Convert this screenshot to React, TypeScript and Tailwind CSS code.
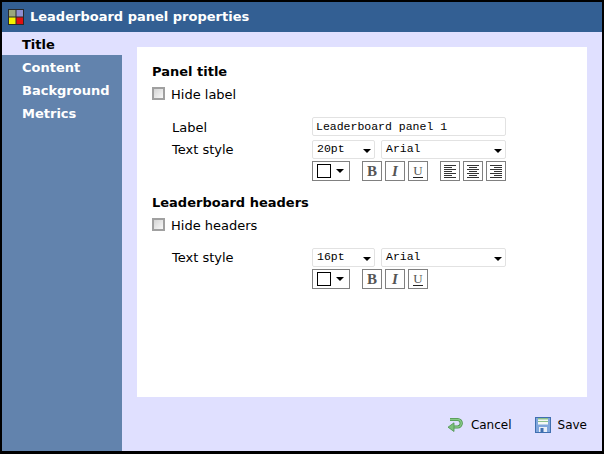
import React from 'react';

const font = { sans: 'font-["DejaVu_Sans",sans-serif]', mono: 'font-["Liberation_Mono",monospace]' };

const navItems = ['Title', 'Content', 'Background', 'Metrics'];

const Arrow: React.FC<{ className?: string }> = ({ className }) => (
  <svg width="8" height="4" viewBox="0 0 8 4" className={className}>
    <path d="M0 0h8L4 4z" fill="#000" />
  </svg>
);

const Checkbox: React.FC = () => (
  <span className="block w-[13px] h-[13px] mb-[3px] border-2 border-[#a0a0a0] bg-gradient-to-br from-[#d4d4d4] to-[#f8f8f8]" />
);

const Select: React.FC<{ value: string; width: string }> = ({ value, width }) => (
  <div className={`${width} h-[19px] flex items-center justify-between border border-[#e2e2e2] rounded-[2px] pl-[4px] pr-[3px] bg-white`}>
    <span className={`${font.mono} text-[11.5px] leading-none text-black mb-[2px]`}>{value}</span>
    <Arrow className="mt-[3px]" />
  </div>
);

const ToolButton: React.FC<{ children: React.ReactNode }> = ({ children }) => (
  <div className="w-[20px] h-[20px] border border-[#808080] flex items-center justify-center bg-white">{children}</div>
);

const AlignIcon: React.FC<{ kind: 'left' | 'center' | 'right' }> = ({ kind }) => {
  const rows = [12, 8, 12, 8, 12, 8, 12];
  return (
    <svg width="14" height="14" viewBox="0 0 14 14">
      {rows.map((w, i) => {
        const x = kind === 'left' ? 1 : kind === 'center' ? (14 - w) / 2 : 13 - w;
        return <rect key={i} x={x} y={1 + i * 2} width={w} height="1" fill="#333" />;
      })}
    </svg>
  );
};

const StyleButtons: React.FC<{ align?: boolean }> = ({ align }) => (
  <div className="flex items-center">
    <div className="w-[38px] h-[20px] border border-[#808080] flex items-center pl-[4px] gap-[5px] bg-white">
      <span className="block w-[14px] h-[14px] border border-black bg-white" />
      <Arrow />
    </div>
    <div className="flex gap-[3px] ml-[12px]">
      <ToolButton><span className='font-["Liberation_Serif",serif] font-bold text-[15px] leading-none text-[#555]'>B</span></ToolButton>
      <ToolButton><span className='font-["Liberation_Serif",serif] font-bold italic text-[15px] leading-none text-[#555]'>I</span></ToolButton>
      <ToolButton>
        <span className='font-["Liberation_Serif",serif] border-b border-[#222] text-[13px] leading-[13px] text-[#555]'>U</span>
      </ToolButton>
    </div>
    {align && (
      <div className="flex gap-[3px] ml-[12px]">
        <ToolButton><AlignIcon kind="left" /></ToolButton>
        <ToolButton><AlignIcon kind="center" /></ToolButton>
        <ToolButton><AlignIcon kind="right" /></ToolButton>
      </div>
    )}
  </div>
);

const TextStyle: React.FC<{ size: string; align?: boolean }> = ({ size, align }) => (
  <div className="flex">
    <span className="w-[160px] pl-[20px] text-[13px] leading-[20px] text-black">Text style</span>
    <div className="flex flex-col gap-[2px]">
      <div className="flex gap-[6px]">
        <Select value={size} width="w-[63px]" />
        <Select value="Arial" width="w-[125px]" />
      </div>
      <StyleButtons align={align} />
    </div>
  </div>
);

const App: React.FC = () => (
  <div className={`${font.sans} w-[604px] h-[454px] border-2 border-b-[3px] border-black flex flex-col bg-[#e0e0ff] overflow-hidden`}>
    <div className="h-[30px] shrink-0 bg-[#335f93] flex items-center pl-[6px] gap-[6px]">
      <svg width="16" height="16" viewBox="0 0 16 16" className="mb-[1px]">
        <rect width="16" height="16" fill="#2a2a2a" />
        <rect x="1" y="1" width="7" height="7" fill="#9aa67c" />
        <rect x="8" y="1" width="7" height="7" fill="#8f8fd0" />
        <rect x="1" y="8" width="7" height="7" fill="#f4f000" />
        <rect x="8" y="8" width="7" height="7" fill="#e01010" />
        <rect x="7.500" y="1" width="1" height="14" fill="#2a2a2a" />
        <rect x="1" y="7.500" width="14" height="1" fill="#2a2a2a" />
      </svg>
      <span className="text-[13px] font-bold text-white">Leaderboard panel properties</span>
    </div>
    <div className="flex flex-1 min-h-0">
      <div className="w-[120px] shrink-0 bg-[#6283ad] flex flex-col">
        {navItems.map((item, i) => (
          <div
            key={item}
            className={`h-[23px] pl-[20px] pt-[2px] flex items-center text-[13px] font-bold ${i === 0 ? 'bg-[#e0e0ff] text-black' : 'text-white'}`}
          >
            {item}
          </div>
        ))}
      </div>
      <div className="flex-1 flex flex-col pl-[15px] pr-[15px] pt-[15px]">
        <div className="h-[350px] bg-white pt-[16px] pl-[15px] flex flex-col">
          <h2 className="text-[13px] leading-[17px] font-bold text-black">Panel title</h2>
          <label className="flex items-center gap-[6px] mt-[6px] h-[17px] text-[13px] text-black">
            <Checkbox />
            Hide label
          </label>
          <div className="flex mt-[14px] h-[19px] items-center">
            <span className="w-[160px] pl-[20px] pt-[2px] text-[13px] leading-none text-black">Label</span>
            <div className="w-[194px] h-[19px] border border-[#e2e2e2] rounded-[2px] pl-[3px] flex items-center">
              <span className={`${font.mono} text-[11.5px] leading-none text-black`}>Leaderboard panel 1</span>
            </div>
          </div>
          <div className="mt-[4px]">
            <TextStyle size="20pt" align />
          </div>
          <h2 className="text-[13px] leading-[17px] font-bold text-black mt-[13px]">Leaderboard headers</h2>
          <label className="flex items-center gap-[6px] mt-[6px] h-[17px] text-[13px] text-black">
            <Checkbox />
            Hide headers
          </label>
          <div className="mt-[14px]">
            <TextStyle size="16pt" />
          </div>
        </div>
        <div className="flex justify-end items-center gap-[23px] h-[52px] pt-[3px] text-[12px] text-black">
          <div className="flex items-center gap-[8px]">
            <svg width="16" height="16" viewBox="0 0 16 16">
              <path d="M3 2.500h7.500a3.500 3.500 0 0 1 0 7.500H6.500" fill="none" stroke="#4c944c" strokeWidth="3.200" />
              <path d="M3 2.500h7.500a3.500 3.500 0 0 1 0 7.500H6.500" fill="none" stroke="#86c886" strokeWidth="1.600" />
              <path d="M7 5.800v8.700L1 10.200z" fill="#7cc07c" stroke="#4c944c" strokeWidth="0.800" />
            </svg>
            Cancel
          </div>
          <div className="flex items-center gap-[7px]">
            <svg width="16" height="16" viewBox="0 0 16 16">
              <rect x="0.500" y="0.500" width="15" height="15" fill="#7fa6dc" stroke="#3f6fb0" />
              <rect x="3" y="1" width="10" height="6.500" fill="#f4f8f4" />
              <rect x="3" y="1" width="10" height="1.500" fill="#8cc08c" />
              <rect x="3" y="4" width="10" height="1" fill="#8cc08c" />
              <rect x="4" y="10" width="8" height="5" fill="#e8eef8" />
              <rect x="5.500" y="11" width="3" height="4" fill="#3f6fb0" />
            </svg>
            Save
          </div>
        </div>
      </div>
    </div>
  </div>
);

export default App;
